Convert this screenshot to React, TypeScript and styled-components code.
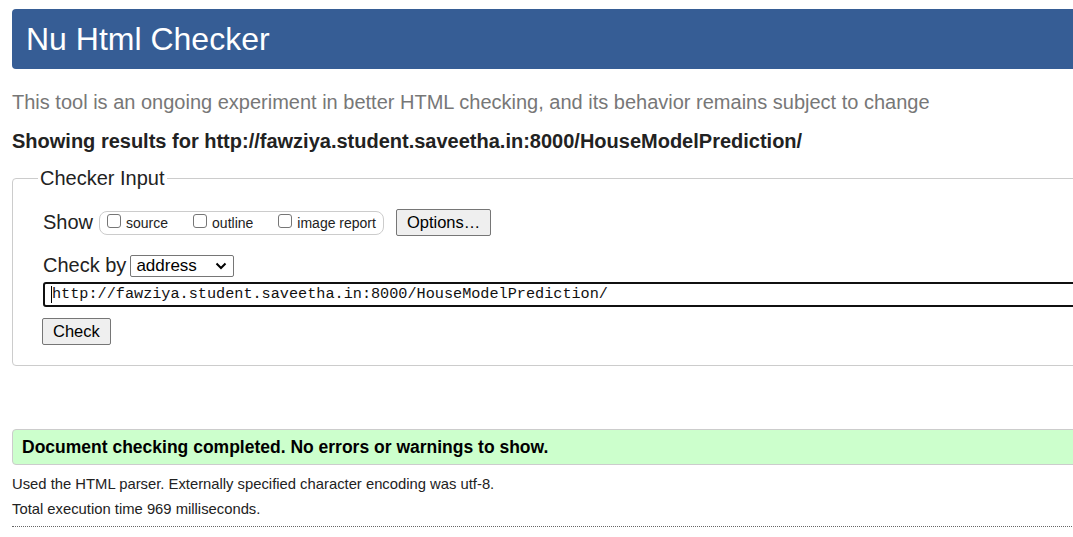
import React from "react";
import styled, { createGlobalStyle } from "styled-components";

const Global = createGlobalStyle`
  html, body { margin: 0; padding: 0; background: #fff; overflow: hidden; }
  body { font-family: "Liberation Sans", Arial, sans-serif; color: #222; }
`;

const Page = styled.div`
  width: 1120px;
  padding: 9px 0 0 12px;
  display: flex;
  flex-direction: column;
`;

const Header = styled.h1`
  margin: 0;
  height: 60px;
  background: #365d95;
  border-radius: 4px;
  color: #fff;
  font-weight: normal;
  font-size: 32px;
  line-height: 60px;
  padding-left: 14px;
`;

const Intro = styled.p`
  margin: 20px 0 0;
  color: #777;
  font-size: 20px;
  line-height: 26px;
`;

const Results = styled.p`
  margin: 13px 0 0;
  font-weight: bold;
  font-size: 20px;
  line-height: 26px;
  color: #222;
`;

const Fieldset = styled.fieldset`
  margin: 13px 0 0;
  border: 1px solid #ccc;
  border-radius: 4px;
  padding: 19px 0 20px 30px;
  display: flex;
  flex-direction: column;
`;

const Legend = styled.legend`
  font-size: 20px;
  padding: 0 2px;
  margin-left: -5px;
  color: #222;
`;

const Row = styled.div<{ $top?: number }>`
  display: flex;
  align-items: center;
  gap: 4px;
  font-size: 20px;
  color: #222;
  margin-top: ${(p) => p.$top ?? 0}px;
`;

const Group = styled.div`
  display: flex;
  align-items: center;
  height: 24px;
  box-sizing: border-box;
  border: 1px solid #ccc;
  border-radius: 8px;
  padding: 0 7px;
  gap: 25px;
  font-size: 14px;
  margin-left: 2px;
`;

const CheckLabel = styled.label`
  display: flex;
  align-items: center;
  gap: 5px;
`;

const Box = styled.span`
  width: 14px;
  height: 14px;
  box-sizing: border-box;
  border: 1px solid #767676;
  border-radius: 3px;
  background: #fff;
  position: relative;
  top: -2px;
`;

const Button = styled.button<{ $ml?: number }>`
  font-family: "Liberation Sans", Arial, sans-serif;
  font-size: 16.5px;
  color: #000;
  background: #efefef;
  border: 1px solid #767676;
  border-radius: 2px;
  padding: 0 10px;
  height: 27px;
  margin-left: ${(p) => p.$ml ?? 0}px;
`;

const Select = styled.div`
  width: 104px;
  height: 22px;
  box-sizing: border-box;
  border: 1px solid #767676;
  border-radius: 2px;
  display: flex;
  align-items: center;
  justify-content: space-between;
  padding: 0 6px 0 5px;
  font-size: 17px;
  color: #000;
`;

const UrlInput = styled.div`
  margin-top: 5px;
  height: 25px;
  box-sizing: border-box;
  border: 2px solid #101010;
  border-radius: 3px;
  font-family: "Liberation Mono", "DejaVu Sans Mono", monospace;
  font-size: 15.2px;
  line-height: 21px;
  padding-left: 6px;
  color: #111;
  display: flex;
  align-items: center;
`;

const Caret = styled.span`
  display: inline-block;
  width: 1px;
  height: 17px;
  background: #000;
`;

const Success = styled.div`
  margin-top: 63px;
  height: 36px;
  box-sizing: border-box;
  background: #ccffcc;
  border: 1px solid #ccc;
  border-radius: 4px;
  font-weight: bold;
  font-size: 17.5px;
  display: flex;
  align-items: center;
  padding-left: 9px;
  color: #000;
`;

const Note = styled.p<{ $top: number }>`
  margin: ${(p) => p.$top}px 0 0;
  font-size: 14.8px;
  line-height: 17px;
  color: #222;
`;

const Rule = styled.hr`
  margin: 8px 0 0;
  border: 0;
  border-top: 1px dotted #666;
`;

function Chevron() {
  return (
    <svg width="12" height="8" viewBox="0 0 12 8">
      <path d="M1.5 1.5 L6 6 L10.5 1.5" fill="none" stroke="#000" strokeWidth="2" />
    </svg>
  );
}

export default function App() {
  return (
    <>
      <Global />
      <Page>
        <Header>Nu Html Checker</Header>
        <Intro>This tool is an ongoing experiment in better HTML checking, and its behavior remains subject to change</Intro>
        <Results>Showing results for http://fawziya.student.saveetha.in:8000/HouseModelPrediction/</Results>
        <Fieldset>
          <Legend>Checker Input</Legend>
          <Row>
            <span>Show</span>
            <Group>
              <CheckLabel><Box />source</CheckLabel>
              <CheckLabel><Box />outline</CheckLabel>
              <CheckLabel><Box />image report</CheckLabel>
            </Group>
            <Button $ml={8}>Options…</Button>
          </Row>
          <Row $top={18}>
            <span>Check by</span>
            <Select><span>address</span><Chevron /></Select>
          </Row>
          <UrlInput><Caret />http://fawziya.student.saveetha.in:8000/HouseModelPrediction/</UrlInput>
          <Row $top={11}>
            <Button $ml={-1}>Check</Button>
          </Row>
        </Fieldset>
        <Success>Document checking completed. No errors or warnings to show.</Success>
        <Note $top={11}>Used the HTML parser. Externally specified character encoding was utf-8.</Note>
        <Note $top={8}>Total execution time 969 milliseconds.</Note>
        <Rule />
      </Page>
    </>
  );
}
